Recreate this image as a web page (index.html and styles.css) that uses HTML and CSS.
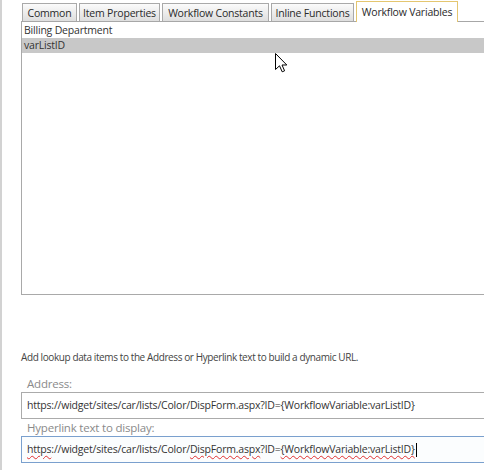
FILE: index.html
```html
<!DOCTYPE html>
<html lang="en">

<head>
  <meta charset="utf-8">
  <title>Insert Hyperlink</title>
  <link rel="stylesheet" href="styles.css">
</head>

<body>

  <div class="dialog">
    <!-- Lookup tabs -->
    <ul class="tabs">
      <li class="tab">Common</li>
      <li class="tab">Item Properties</li>
      <li class="tab">Workflow Constants</li>
      <li class="tab">Inline Functions</li>
      <li class="tab active">Workflow Variables</li>
    </ul>

    <!-- Variable list -->
    <div class="var-list">
      <div class="var-item">Billing Department</div>
      <div class="var-item selected">varListID</div>
    </div>

    <p class="hint">Add lookup data items to the Address or Hyperlink text to build a dynamic URL.</p>

    <div class="field">
      <label class="field-label">Address:</label>
      <div class="field-input">https://widget/sites/car/lists/Color/DispForm.aspx?ID={WorkflowVariable:varListID}</div>
    </div>

    <div class="field">
      <label class="field-label">Hyperlink text to display:</label>
      <div class="field-input focused"><span class="misspelled">https</span>://widget/sites/car/lists/Color/<span class="misspelled">DispForm.aspx</span>?ID=<span class="misspelled">{WorkflowVariable:varListID}</span><span class="caret"></span></div>
    </div>
  </div>

  <!-- mouse pointer -->
  <svg class="pointer" width="13" height="20" viewBox="0 0 13 20">
    <path d="M0.5 0.5 L0.5 16.5 L4.5 12.8 L7.2 18.8 L9.6 17.8 L7 12 L11.8 12 Z" fill="#fff" stroke="#000" stroke-width="1" />
  </svg>

</body>

</html>
```

FILE: styles.css
```css
html,
body {
  margin: 0;
  padding: 0;
  background: #fff;
  overflow: hidden;
}

body {
  width: 484px;
  height: 470px;
  position: relative;
  font-family: "Open Sans", "Noto Sans", sans-serif;
  color: #333;
}

.dialog {
  height: 470px;
  border-left: 2px solid #d2d2d2;
  padding-left: 19px;
}

/* Tabs */
.tabs {
  list-style: none;
  margin: 0;
  padding: 1px 0 0 1px;
  display: flex;
  align-items: flex-end;
  gap: 2px;
  height: 22px;
  width: 480px;
  border-bottom: 1px solid #a7a7a7;
  box-sizing: border-box;
}

.tab {
  font-size: 10.5px;
  letter-spacing: -0.2px;
  line-height: 18px;
  height: 18px;
  border: 1px solid #a9a9a9;
  border-bottom: none;
  background: linear-gradient(#fbfbfb, #dedede);
  color: #2a2a2a;
  text-align: center;
  white-space: nowrap;
  box-sizing: border-box;
}

.tab:nth-child(1) { width: 55px; }
.tab:nth-child(2) { width: 81px; }
.tab:nth-child(3) { width: 107px; }
.tab:nth-child(4) { width: 83px; }
.tab:nth-child(5) { width: 102px; }

.tab.active {
  height: 21px;
  line-height: 21px;
  background: #fff;
  border-color: #e4c670;
  margin-bottom: -1px;
}

/* Variable list */
.var-list {
  width: 480px;
  height: 273px;
  border-left: 1px solid #a9a9a9;
  border-bottom: 1px solid #a9a9a9;
  box-sizing: border-box;
}

.var-item {
  font-size: 10.5px;
  letter-spacing: -0.2px;
  line-height: 16px;
  padding-left: 2px;
  color: #333;
}

.var-item.selected {
  background-color: #c8c8c8;
  line-height: 15px;
}

.hint {
  margin: 55px 0 11px 0;
  font-size: 10px;
  letter-spacing: -0.4px;
  line-height: 15px;
  color: #444;
}

/* Address fields */
.field {
  width: 480px;
}

.field-label {
  display: block;
  font-size: 11.5px;
  letter-spacing: -0.2px;
  line-height: 16px;
  color: #8a8a8a;
  padding-left: 6px;
}

.field-input {
  height: 27px;
  box-sizing: border-box;
  border: 1px solid #ababab;
  border-right: none;
  padding-left: 5px;
  font-size: 10.5px;
  letter-spacing: -0.2px;
  line-height: 25px;
  color: #333;
  white-space: nowrap;
}

.field + .field .field-label {
  margin-top: 1px;
}

.field-input.focused {
  border-color: #7aa0ce;
  background: #fbfdfe;
}

.misspelled {
  text-decoration: underline wavy #e03030;
  text-decoration-thickness: 1px;
  text-underline-offset: 2px;
}

.caret {
  display: inline-block;
  width: 1px;
  height: 14px;
  background: #000;
  vertical-align: middle;
  margin-left: 1px;
}

.pointer {
  position: absolute;
  left: 275px;
  top: 53px;
}
```
